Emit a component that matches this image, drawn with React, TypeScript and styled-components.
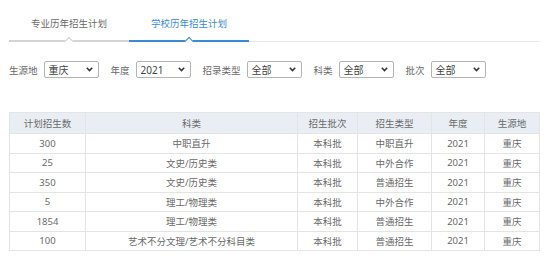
import React from "react";
import styled, { createGlobalStyle } from "styled-components";

const GlobalStyle = createGlobalStyle`
  body {
    margin: 0;
    background: #fff;
    font-family: "Noto Sans", "Noto Sans CJK SC", sans-serif;
    color: #6a6a6a;
  }
`;

const Page = styled.div`
  width: 549px;
  height: 268px;
  padding: 11px 10px 0 9px;
  box-sizing: border-box;
  overflow: hidden;
`;

const TabBar = styled.div`
  display: flex;
  width: 530px;
  border-bottom: 1px solid #e6e6e6;
`;

const Tab = styled.div<{ active?: boolean }>`
  position: relative;
  width: 120px;
  height: 31px;
  line-height: 25px;
  text-align: center;
  font-size: 9.5px;
  color: ${(p) => (p.active ? "#3a8ad6" : "#6a6a6a")};
  border-bottom: 2px solid ${(p) => (p.active ? "#3a8ad6" : "#d4d4d4")};
  margin-bottom: -1px;
  box-sizing: border-box;

  &::after {
    content: "";
    position: absolute;
    left: 50%;
    bottom: -4px;
    width: 5px;
    height: 5px;
    margin-left: -3px;
    background: #fff;
    border-left: 1px solid ${(p) => (p.active ? "#3a8ad6" : "#d4d4d4")};
    border-top: 1px solid ${(p) => (p.active ? "#3a8ad6" : "#d4d4d4")};
    transform: rotate(45deg);
  }
`;

const Filters = styled.div`
  display: flex;
  align-items: center;
  margin-top: 19px;
  font-size: 9.5px;
`;

const Label = styled.span`
  margin-right: 6px;
  color: #6a6a6a;
`;

const SelectWrap = styled.div`
  position: relative;
  width: 55px;
  height: 17px;
  margin-right: 12px;
`;

const Select = styled.select`
  appearance: none;
  width: 100%;
  height: 100%;
  border: 1px solid #b4b4b4;
  border-radius: 2px;
  background: #fff;
  padding: 0 0 0 4px;
  font-family: inherit;
  font-size: 10px;
  color: #444;
  outline: none;
`;

const Chevron = styled.svg`
  position: absolute;
  right: 6px;
  top: 6px;
  pointer-events: none;
`;

const Table = styled.table`
  margin-top: 34px;
  width: 530px;
  border-collapse: collapse;
  table-layout: fixed;
  font-size: 9.5px;
  color: #6a6a6a;
`;

const Th = styled.th`
  height: 20px;
  padding: 0;
  font-weight: normal;
  background: #e9eef5;
  border: 1px solid #e4e4e4;
  text-align: center;
`;

const Td = styled.td`
  height: 18.5px;
  padding: 0;
  border: 1px solid #e4e4e4;
  text-align: center;
`;

const filters = [
  { label: "生源地", value: "重庆" },
  { label: "年度", value: "2021" },
  { label: "招录类型", value: "全部" },
  { label: "科类", value: "全部" },
  { label: "批次", value: "全部" },
];

const columns = [
  { title: "计划招生数", width: 76 },
  { title: "科类", width: 212 },
  { title: "招生批次", width: 60 },
  { title: "招生类型", width: 74 },
  { title: "年度", width: 53 },
  { title: "生源地", width: 55 },
];

const rows = [
  ["300", "中职直升", "本科批", "中职直升", "2021", "重庆"],
  ["25", "文史/历史类", "本科批", "中外合作", "2021", "重庆"],
  ["350", "文史/历史类", "本科批", "普通招生", "2021", "重庆"],
  ["5", "理工/物理类", "本科批", "中外合作", "2021", "重庆"],
  ["1854", "理工/物理类", "本科批", "普通招生", "2021", "重庆"],
  ["100", "艺术不分文理/艺术不分科目类", "本科批", "普通招生", "2021", "重庆"],
];

export default function App() {
  return (
    <Page>
      <GlobalStyle />
      <TabBar>
        <Tab>专业历年招生计划</Tab>
        <Tab active>学校历年招生计划</Tab>
      </TabBar>

      <Filters>
        {filters.map((f) => (
          <React.Fragment key={f.label}>
            <Label>{f.label}</Label>
            <SelectWrap>
              <Select defaultValue={f.value}>
                <option value={f.value}>{f.value}</option>
              </Select>
              <Chevron width="7" height="5" viewBox="0 0 7 5">
                <path d="M0.8 0.8 L3.5 3.6 L6.2 0.8" fill="none" stroke="#333" strokeWidth="1.5" />
              </Chevron>
            </SelectWrap>
          </React.Fragment>
        ))}
      </Filters>

      <Table>
        <colgroup>
          {columns.map((c) => (
            <col key={c.title} style={{ width: c.width }} />
          ))}
        </colgroup>
        <thead>
          <tr>
            {columns.map((c) => (
              <Th key={c.title}>{c.title}</Th>
            ))}
          </tr>
        </thead>
        <tbody>
          {rows.map((r, i) => (
            <tr key={i}>
              {r.map((cell, j) => (
                <Td key={j}>{cell}</Td>
              ))}
            </tr>
          ))}
        </tbody>
      </Table>
    </Page>
  );
}
